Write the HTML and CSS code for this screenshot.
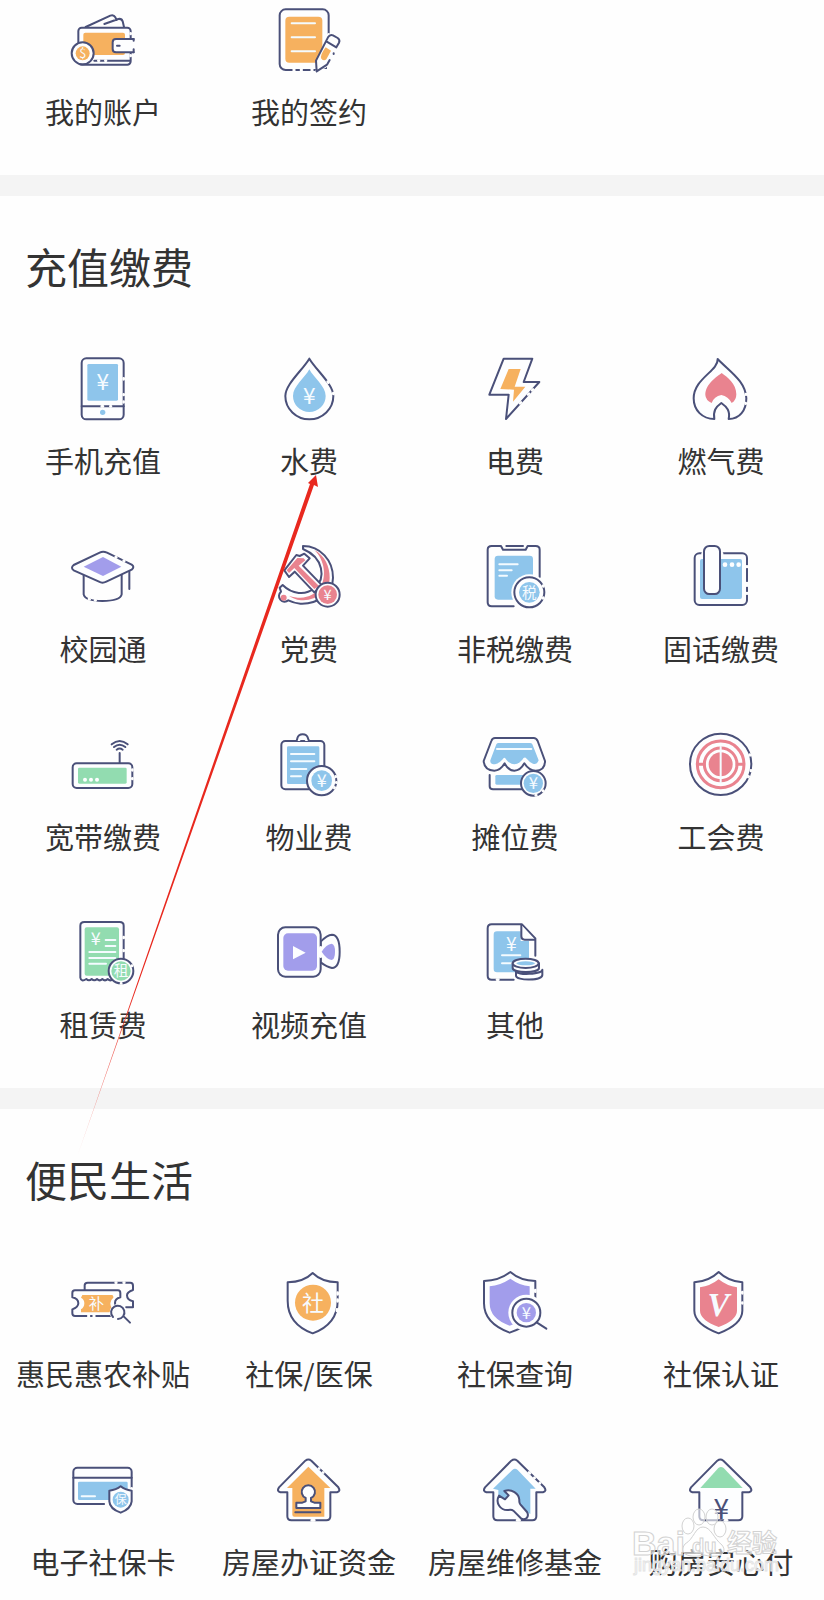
FILE: index.html
```html
<!DOCTYPE html>
<html lang="zh-CN">
<head>
    <meta charset="UTF-8">
    <meta name="viewport" content="width=device-width, initial-scale=1.0">
    <title>充值缴费</title>
    <link rel="stylesheet" href="styles.css">
</head>
<body>
<main class="page">
    <section class="section first">
        <div class="grid">
            <a class="item" href="#">
                <svg class="icon" viewBox="0 0 192 192">
                    <path class="line" d="M44 57L118 23Q128 19 133 28L137 36M100 48L142 33Q152 31 155 40L159 57"/>
                    <rect class="line" x="22" y="59" width="157" height="111" rx="10"/>
                    <rect class="orange" x="37" y="74" width="125" height="67" rx="6"/>
                    <path class="line" d="M70 158H177"/>
                    <path class="gap" d="M82 158h2M103 158h2M179 76v2M179 142v2"/>
                    <path class="line fill" d="M188 93H135Q125 93 125 103V123Q125 133 135 133H188"/>
                    <path class="line" d="M188 93V98M188 124V133M138 113h8"/>
                    <circle class="line" cx="35" cy="136" r="33"/>
                    <circle class="orange" cx="35" cy="136" r="21"/>
                    <text class="sign" x="35" y="150" font-size="38">$</text>
                </svg>
                <span>我的账户</span>
            </a>
            <a class="item" href="#">
                <svg class="icon" viewBox="0 0 192 192">
                    <rect class="line" x="8" y="4" width="147" height="182" rx="18"/>
                    <rect class="orange" x="25" y="26" width="111" height="138" rx="12"/>
                    <path class="white" d="M44 46H114M44 88H114M44 130H114"/>
                    <path class="gap wide" d="M155 80V190M120 188H155"/>
                    <path class="gap" d="M50 186h2M72 186h2M104 186h2"/>
                    <path class="halo" d="M119 190L117 158L150 92L186 108L158 160Z"/>
                    <path class="line" d="M158 156L150 170L119 190L117 158L153 88Q159 78 168 82L182 90Q190 96 186 104L178 118L148 100M170 136v2"/>
                    <path class="orange" d="M146 118L162 128L148 154Q140 160 133 152Q128 142 146 118Z"/>
                </svg>
                <span>我的签约</span>
            </a>
        </div>
    </section>

    <section class="section">
        <h2>充值缴费</h2>
        <div class="grid">
            <a class="item" href="#">
                <svg class="icon" viewBox="0 0 192 192">
                    <rect class="line" x="32" y="4" width="126" height="183" rx="14"/>
                    <rect class="blue" x="49" y="21" width="92" height="110" rx="4"/>
                    <path class="line" d="M32 148H158"/>
                    <path class="gap" d="M92 148h4M118 148h2M158 64v3M158 112v2M158 134v2"/>
                    <circle class="blue" cx="95" cy="166" r="8"/>
                    <text class="sign" x="95" y="100" font-size="68">¥</text>
                </svg>
                <span>手机充值</span>
            </a>
            <a class="item" href="#">
                <svg class="icon" viewBox="0 0 192 192">
                    <path class="line" d="M97 5C76 40 25 82 25 117A72 70 0 0 0 169 117C169 82 118 40 97 5Z"/>
                    <path class="blue" d="M97 37C84 62 48 88 48 117A49 48 0 0 0 146 117C146 88 110 62 97 37Z"/>
                    <path class="gap" d="M152 74l2 3M169 108v3"/>
                    <text class="sign" x="97" y="142" font-size="68">¥</text>
                </svg>
                <span>水费</span>
            </a>
            <a class="item" href="#">
                <svg class="icon" viewBox="0 0 192 192">
                    <path class="line" d="M62 5H148L122 75H169L69 186L77 113H19Z"/>
                    <path class="orange" d="M77 36H113L95 89H127L90 134L93 98L52 96Z"/>
                    <path class="gap" d="M150 97l-3 3M138 110l-3 3M114 136l-3 3"/>
                </svg>
                <span>电费</span>
            </a>
            <a class="item" href="#">
                <svg class="icon" viewBox="0 0 192 192">
                    <path class="line" d="M86 6C88 42 14 65 14 124C14 160 40 186 76 186C72 162 80 150 97 138C114 150 124 162 119 186C152 186 172 160 172 124C170 72 122 44 86 6Z"/>
                    <path class="red" d="M98 48C85 58 49 80 49 114Q50 130 68 138Q75 118 97 114Q118 118 128 138Q142 130 142 112C142 80 115 60 98 48Z"/>
                    <path class="gap" d="M171 111v2M170 138v2"/>
                </svg>
                <span>燃气费</span>
            </a>
            <a class="item" href="#">
                <svg class="icon" viewBox="0 0 192 192">
                    <path class="line" d="M38 84V148Q42 167 94 168Q148 167 152 148V84M175 74V132"/>
                    <path class="line" d="M86 23Q96 18 108 23L182 59Q192 66 182 74L106 110Q94 116 84 110L8 76Q-2 68 8 60Z"/>
                    <path class="purple" d="M96 36L151 65L96 93L38 65Z"/>
                    <path class="gap" d="M134 36l2 1M158 47l2 1M54 162l2 1M72 166l2 0"/>
                </svg>
                <span>校园通</span>
            </a>
            <a class="item" href="#">
                <svg class="icon" viewBox="0 0 192 192">
                    <path class="line" d="M78 3C130 3 168 46 168 98C168 148 120 178 70 176Q50 174 34 166A16 16 0 1 1 12 140L8 128L17 120C45 148 85 152 112 130C148 100 140 38 78 12Z"/>
                    <path class="red" d="M112 15C144 32 158 65 158 98C158 144 112 166 72 166Q48 162 36 152C82 168 112 150 128 130C150 98 144 45 112 15Z"/>
                    <circle class="red" cx="20" cy="158" r="9"/>
                    <path class="line" d="M22 76L58 30L68 33L82 26L98 40L78 62L136 122L112 142L53 80L36 96Z"/>
                    <path class="red" d="M29 76L61 39L80 40L85 46L65 62L126 123L112 132L52 69L36 84Z"/>
                    <circle class="line" cx="152" cy="149" r="36"/>
                    <circle class="red" cx="152" cy="149" r="28"/>
                    <text class="sign" x="152" y="166" font-size="44">¥</text>
                </svg>
                <span>党费</span>
            </a>
            <a class="item" href="#">
                <svg class="icon" viewBox="0 0 192 192">
                    <path class="line" d="M92 184H26Q14 184 14 172V14Q14 3 26 3H54L60 14H128L134 3H158Q170 3 170 14V96M70 3H120"/>
                    <rect class="blue" x="35" y="32" width="115" height="132" rx="10"/>
                    <path class="white" d="M49 58H104M49 76H86M49 92H72"/>
                    <circle class="halo" cx="139" cy="142" r="54"/>
                    <circle class="line" cx="139" cy="142" r="45"/>
                    <circle class="blue" cx="139" cy="142" r="31"/>
                    <path class="gap" d="M180 122l1 2M181 158l-1 2"/>
                    <text class="sign" x="139" y="158" font-size="44">税</text>
                </svg>
                <span>非税缴费</span>
            </a>
            <a class="item" href="#">
                <svg class="icon" viewBox="0 0 192 192">
                    <rect class="line" x="17" y="25" width="157" height="155" rx="14"/>
                    <rect class="blue" x="33" y="42" width="126" height="120" rx="6"/>
                    <path class="gap wide" d="M42 25v4M98 25v4"/>
                    <path class="gap" d="M174 64v2M174 114v8M174 144v2"/>
                    <rect class="line" x="45" y="3" width="48" height="144" rx="16"/>
                    <circle class="dot" cx="108" cy="59" r="7"/>
                    <circle class="dot" cx="129" cy="59" r="7"/>
                    <circle class="dot" cx="149" cy="59" r="7"/>
                </svg>
                <span>固话缴费</span>
            </a>
            <a class="item" href="#">
                <svg class="icon" viewBox="0 0 192 192">
                    <rect class="line" x="5" y="91" width="179" height="74" rx="12"/>
                    <rect class="green" x="21" y="104" width="146" height="48" rx="4"/>
                    <path class="line" d="M146 60V90M122 34Q146 14 170 34M129 42Q146 28 163 42M137 50Q146 43 155 50"/>
                    <path class="gap" d="M184 110v2M184 136v2"/>
                    <circle class="dot" cx="42" cy="140" r="6"/>
                    <circle class="dot" cx="60" cy="140" r="6"/>
                    <circle class="dot" cx="78" cy="140" r="6"/>
                </svg>
                <span>宽带缴费</span>
            </a>
            <a class="item" href="#">
                <svg class="icon" viewBox="0 0 192 192">
                    <rect class="line" x="13" y="24" width="129" height="145" rx="12"/>
                    <path class="line fill" d="M58 24Q60 22 61 16Q64 4 77 4Q90 4 93 16Q94 22 98 24"/>
                    <path class="line" d="M72 24h10"/>
                    <rect class="blue" x="30" y="40" width="97" height="113" rx="4"/>
                    <path class="white" d="M42 63H112M42 85H112M42 108H88M42 130H72"/>
                    <circle class="line" cx="134" cy="143" r="44"/>
                    <circle class="blue" cx="134" cy="143" r="31"/>
                    <path class="gap" d="M176 130v2M178 148v1M173 163l-1 2"/>
                    <text class="sign" x="134" y="162" font-size="54">¥</text>
                </svg>
                <span>物业费</span>
            </a>
            <a class="item" href="#">
                <svg class="icon" viewBox="0 0 192 192">
                    <path class="line" d="M20 126V160Q20 169 30 169H120"/>
                    <rect class="blue" x="37" y="126" width="90" height="29" rx="4"/>
                    <path class="line" d="M36 15H152Q160 15 164 24L186 84Q186 113 158 113Q138 113 124 91Q112 113 94 113Q76 113 65 91Q52 113 34 113Q4 112 2 84L25 24Q28 15 36 15Z"/>
                    <path class="blue" d="M47 30H141Q146 30 148 34L167 82Q162 96 150 92Q140 88 128 74Q122 72 118 80Q94 108 70 80Q64 70 60 78Q48 92 36 94Q20 94 22 82L40 34Q42 30 47 30Z"/>
                    <path class="white" d="M42 48H145"/>
                    <circle class="line" cx="151" cy="151" r="37"/>
                    <circle class="blue" cx="151" cy="151" r="29"/>
                    <path class="gap" d="M158 187h2M180 174l1-1"/>
                    <text class="sign" x="151" y="169" font-size="50">¥</text>
                </svg>
                <span>摊位费</span>
            </a>
            <a class="item" href="#">
                <svg class="icon" viewBox="0 0 192 192">
                    <circle class="line" cx="95" cy="94" r="92"/>
                    <circle class="ring" cx="95" cy="94" r="70"/>
                    <circle class="ring" cx="95" cy="94" r="49"/>
                    <circle class="red" cx="95" cy="94" r="36"/>
                    <path class="white" d="M95 42V148"/>
                    <path class="ring" d="M50 94H25M140 94H165"/>
                    <path class="gap" d="M182 65l1 2M186 112v2M179 130l-1 2"/>
                </svg>
                <span>工会费</span>
            </a>
            <a class="item" href="#">
                <svg class="icon" viewBox="0 0 192 192">
                    <path class="line" d="M28 170V14Q28 3 40 3H146Q158 3 158 14V172Q150 182 142 174Q134 182 126 174Q118 182 110 174Q102 182 94 174Q86 182 78 174Q70 182 62 174Q54 182 46 174Q30 184 28 170Z"/>
                    <rect class="green" x="41" y="19" width="103" height="145" rx="6"/>
                    <path class="white" d="M104 57H133M104 75H133M55 93H133M55 111H133M55 128H105"/>
                    <path class="gap" d="M158 48v3M158 88v2"/>
                    <text class="sign" x="74" y="73" font-size="54">¥</text>
                    <circle class="line" cx="150" cy="150" r="37"/>
                    <circle class="green" cx="150" cy="150" r="29"/>
                    <path class="gap" d="M150 187h1M183 134v1"/>
                    <text class="sign" x="150" y="166" font-size="44">租</text>
                </svg>
                <span>租赁费</span>
            </a>
            <a class="item" href="#">
                <svg class="icon" viewBox="0 0 192 192">
                    <path class="line" d="M131 62Q150 42 165 41Q188 42 188 92Q188 140 165 141Q150 138 131 124Z"/>
                    <rect class="line" x="3" y="19" width="128" height="148" rx="22"/>
                    <rect class="purple" x="19" y="37" width="101" height="112" rx="14"/>
                    <path class="gap wide" d="M131 80V106"/>
                    <path class="purple" d="M134 92Q148 70 164 68Q174 70 174 92Q174 114 164 117Q148 114 134 92Z"/>
                    <path class="dot" d="M48 75L86 95L48 115Z"/>
                </svg>
                <span>视频充值</span>
            </a>
            <a class="item" href="#">
                <svg class="icon" viewBox="0 0 192 192">
                    <path class="line" d="M157 104V52L117 10H26Q14 10 14 22V164Q14 176 26 176H92"/>
                    <path class="blue" d="M42 31H113V60H138V154H42Q32 154 32 144V41Q32 31 42 31Z"/>
                    <path class="line fill" d="M115 12V46Q115 56 125 56H155"/>
                    <path class="gap" d="M42 176h4"/>
                    <path class="white" d="M57 103H112M57 127H85"/>
                    <text class="sign" x="85" y="90" font-size="58">¥</text>
                    <path class="line" d="M99 150V164C99 180 178 180 178 162V146C178 160 99 164 99 150Z"/>
                    <path class="line fill" d="M89 127V141C89 157 168 157 168 141V127"/>
                    <ellipse class="line" cx="128" cy="127" rx="39" ry="14"/>
                    <ellipse class="blue" cx="128" cy="127" rx="28" ry="6"/>
                </svg>
                <span>其他</span>
            </a>
        </div>
    </section>

    <section class="section last">
        <h2>便民生活</h2>
        <div class="grid">
            <a class="item" href="#">
                <svg class="icon" viewBox="0 0 192 192">
                    <path class="line" d="M41 62V46Q41 38 50 38H178Q186 38 186 47V60Q168 66 168 76Q168 90 186 94V112H165"/>
                    <path class="gap" d="M134 38h2M158 38h2"/>
                    <path class="line" d="M12 61H141Q148 61 148 69V82Q132 86 132 99Q132 112 148 116V138H12Q4 138 4 130V118Q22 112 22 100Q22 86 4 82V69Q4 61 12 61Z"/>
                    <path class="orange" d="M34 75H123Q127 75 127 80V83Q118 90 118 100Q118 112 127 117V127H30V118Q40 112 40 100Q40 88 30 83Z"/>
                    <text class="sign" x="76" y="118" font-size="46">补</text>
                    <path class="gap" d="M52 138h2M68 138h2"/>
                    <circle class="halo" cx="142" cy="127" r="26"/>
                    <path class="line" d="M126 141A20 20 0 1 1 141 147M158 139L177 158"/>
                </svg>
                <span>惠民惠农补贴</span>
            </a>
            <a class="item" href="#">
                <svg class="icon" viewBox="0 0 192 192">
                    <path class="line" d="M107 9Q134 36 182 37V92Q182 162 107 190Q32 162 32 92V37Q80 36 107 9Z"/>
                    <circle class="orange" cx="108" cy="98" r="54"/>
                    <path class="gap" d="M182 68v5M182 89v5M180 118v5"/>
                    <text class="sign" x="108" y="122" font-size="66">社</text>
                </svg>
                <span>社保/医保</span>
            </a>
            <a class="item" href="#">
                <svg class="icon" viewBox="0 0 192 192">
                    <path class="line" d="M82 6Q112 32 157 33V100Q157 164 80 188Q3 160 3 100V33Q48 32 82 6Z"/>
                    <path class="purple" d="M82 26Q110 46 140 49V100Q140 148 80 167Q20 146 20 100V49Q52 46 82 26Z"/>
                    <circle class="halo" cx="130" cy="128" r="54"/>
                    <circle class="line" cx="130" cy="128" r="42"/>
                    <circle class="purple" cx="130" cy="128" r="29"/>
                    <path class="line" d="M162 158L190 176"/>
                    <path class="gap" d="M157 60v5"/>
                    <text class="sign" x="130" y="146" font-size="50">¥</text>
                </svg>
                <span>社保查询</span>
            </a>
            <a class="item" href="#">
                <svg class="icon" viewBox="0 0 192 192">
                    <path class="line" d="M89 6Q118 34 160 37V122Q160 162 89 190Q16 162 16 122V37Q60 34 89 6Z"/>
                    <path class="red" d="M89 28Q114 48 144 52V122Q144 150 89 171Q33 150 33 122V52Q64 48 89 28Z"/>
                    <path class="gap" d="M160 66v4M160 98v2"/>
                    <text class="sign vee" x="88" y="137" font-size="98">V</text>
                </svg>
                <span>社保认证</span>
            </a>
            <a class="item" href="#">
                <svg class="icon" viewBox="0 0 192 192">
                    <rect class="line" x="7" y="29" width="175" height="109" rx="12"/>
                    <path class="line" d="M7 59H182"/>
                    <rect class="blue" x="21" y="71" width="149" height="55" rx="4"/>
                    <path class="white" d="M32 115H72"/>
                    <path class="gap wide" d="M182 92V140M106 138H120"/>
                    <path class="line" d="M149 85Q162 96 182 98V130Q180 152 149 164Q116 152 115 130V98Q136 96 149 85Z"/>
                    <circle class="blue" cx="149" cy="125" r="24"/>
                    <text class="sign" x="149" y="138" font-size="36">保</text>
                </svg>
                <span>电子社保卡</span>
            </a>
            <a class="item" href="#">
                <svg class="icon" viewBox="0 0 192 192">
                    <path class="line" d="M85 8Q94 1 103 8L184 88Q192 100 180 103H160V175Q160 187 148 187H43Q31 187 31 175V103H10Q-2 100 6 88Z"/>
                    <path class="orange" d="M94 26L160 90H142V176H52Q46 176 46 170V90H30Z"/>
                    <path class="gap" d="M126 31l1 1M138 43l1 1M104 187h8"/>
                    <path class="line" d="M86 120A20 20 0 1 1 102 120V130L112 134H130V150H58V134H76L86 130Z"/>
                    <path class="line" d="M55 163H130"/>
                </svg>
                <span>房屋办证资金</span>
            </a>
            <a class="item" href="#">
                <svg class="icon" viewBox="0 0 192 192">
                    <path class="line" d="M85 8Q94 1 103 8L184 88Q192 100 180 103H160V175Q160 187 148 187H43Q31 187 31 175V103H10Q-2 100 6 88Z"/>
                    <path class="blue" d="M88 36Q96 28 104 36L158 92H142V168L46 110V96L30 92Z"/>
                    <path class="gap" d="M138 43l3 3M154 59l1 1M170 75l1 1M102 187h8"/>
                    <path class="line" d="M48 113L66 124L77 112L64 99C86 92 108 106 109 126Q108 134 112 139L132 162Q138 172 131 180Q122 188 113 180L91 158Q86 154 76 156C52 158 36 134 48 113Z"/>
                </svg>
                <span>房屋维修基金</span>
            </a>
            <a class="item" href="#">
                <svg class="icon" viewBox="0 0 192 192">
                    <path class="line" d="M85 8Q94 1 103 8L184 88Q192 100 180 103H160V175Q160 187 148 187H43Q31 187 31 175V103H10Q-2 100 6 88Z"/>
                    <path class="green" d="M88 30Q96 24 104 30L161 90H34Z"/>
                    <path class="gap" d="M108 187h6"/>
                    <text class="sign navy" x="97" y="184" font-size="84">¥</text>
                </svg>
                <span>购房安心付</span>
            </a>
        </div>
    </section>

    <svg class="arrow" viewBox="0 0 242 682">
        <defs>
            <linearGradient id="fade" x1="0" y1="1" x2="0" y2="0">
                <stop offset="0" stop-color="#e8281e" stop-opacity="0.3"/>
                <stop offset="0.25" stop-color="#e8281e"/>
            </linearGradient>
        </defs>
        <path fill="url(#fade)" d="M0 682L233 9L231 8L239 0L241 12L237 10Z"/>
    </svg>

    <svg class="watermark" viewBox="0 0 150 70">
        <ellipse cx="56" cy="19" rx="6" ry="8"/>
        <ellipse cx="67" cy="10" rx="6" ry="8"/>
        <ellipse cx="80" cy="10" rx="6" ry="8"/>
        <ellipse cx="88" cy="22" rx="6" ry="8"/>
        <path d="M71 20C79 20 82 32 90 38C96 46 88 52 72 48C56 52 46 46 53 37C62 32 63 20 71 20Z"/>
        <text x="0" y="48" font-size="34">Bai</text>
        <text x="60" y="46" font-size="20">du</text>
        <text x="95" y="45" font-size="25">经验</text>
        <text class="url" x="2" y="64" font-size="18">jingyan.baidu.com</text>
    </svg>
</main>
</body>
</html>
```

FILE: styles.css
```css
* {
    box-sizing: border-box;
}
body {
    margin: 0;
    background: #fefefe;
    color: #333;
    font-family: "Noto Sans CJK SC", sans-serif;
}
.page {
    position: relative;
    overflow: hidden;
}
.section {
    padding: 40px 0 44px;
    border-bottom: 21px solid #f4f4f4;
}
.section.first {
    padding-top: 8px;
}
.section.last {
    padding-bottom: 16px;
    border-bottom: 0;
}
h2 {
    margin: 0 0 61px;
    padding-left: 25px;
    font-size: 42px;
    font-weight: 400;
    line-height: 60px;
}
.grid {
    display: grid;
    grid-template-columns: repeat(4, 1fr);
    row-gap: 65px;
}
.item {
    display: flex;
    flex-direction: column;
    align-items: center;
    gap: 19px;
    color: #333;
    font-size: 29px;
    font-weight: 400;
    line-height: 40px;
    text-decoration: none;
    white-space: nowrap;
}

/* icons */
.icon {
    width: 64px;
    height: 64px;
    overflow: visible;
}
.line {
    fill: #fdfeff;
    stroke: #4a5079;
    stroke-width: 6;
    stroke-linecap: round;
    stroke-linejoin: round;
}
path.line {
    fill: none;
}
path.line.fill, path.line[d$="Z"] {
    fill: #fdfeff;
}
.white {
    fill: none;
    stroke: #f4fbff;
    stroke-width: 6;
    stroke-linecap: round;
}
.gap {
    fill: none;
    stroke: #fefefe;
    stroke-width: 8;
    stroke-linecap: round;
}
.gap.wide {
    stroke-width: 10;
}
.halo, .dot {
    fill: #fdfeff;
}
.orange {
    fill: #f6b15f;
}
.blue {
    fill: #8ec5eb;
}
.red {
    fill: #e9838f;
}
.purple {
    fill: #a29deb;
}
.green {
    fill: #92dcb0;
}
.ring {
    fill: none;
    stroke: #e9838f;
    stroke-width: 9;
}
.sign {
    fill: #f6fbff;
    font-weight: 400;
    text-anchor: middle;
}
.sign.vee {
    font-family: "Liberation Serif", serif;
    font-style: italic;
    font-weight: bold;
}
.sign.navy {
    fill: #4a5079;
}

/* overlays */
.arrow {
    position: absolute;
    top: 475px;
    left: 77px;
    width: 242px;
    height: 682px;
}
.watermark {
    position: absolute;
    right: 42px;
    bottom: 20px;
    width: 150px;
    height: 70px;
    overflow: visible;
    fill: rgba(255, 255, 255, 0.6);
    stroke: #d2d2d2;
    stroke-width: 1;
    font-family: "Liberation Sans", "Noto Sans CJK SC", sans-serif;
    font-weight: bold;
}
.watermark .url {
    stroke: #e4e4e4;
    font-weight: normal;
}
```
